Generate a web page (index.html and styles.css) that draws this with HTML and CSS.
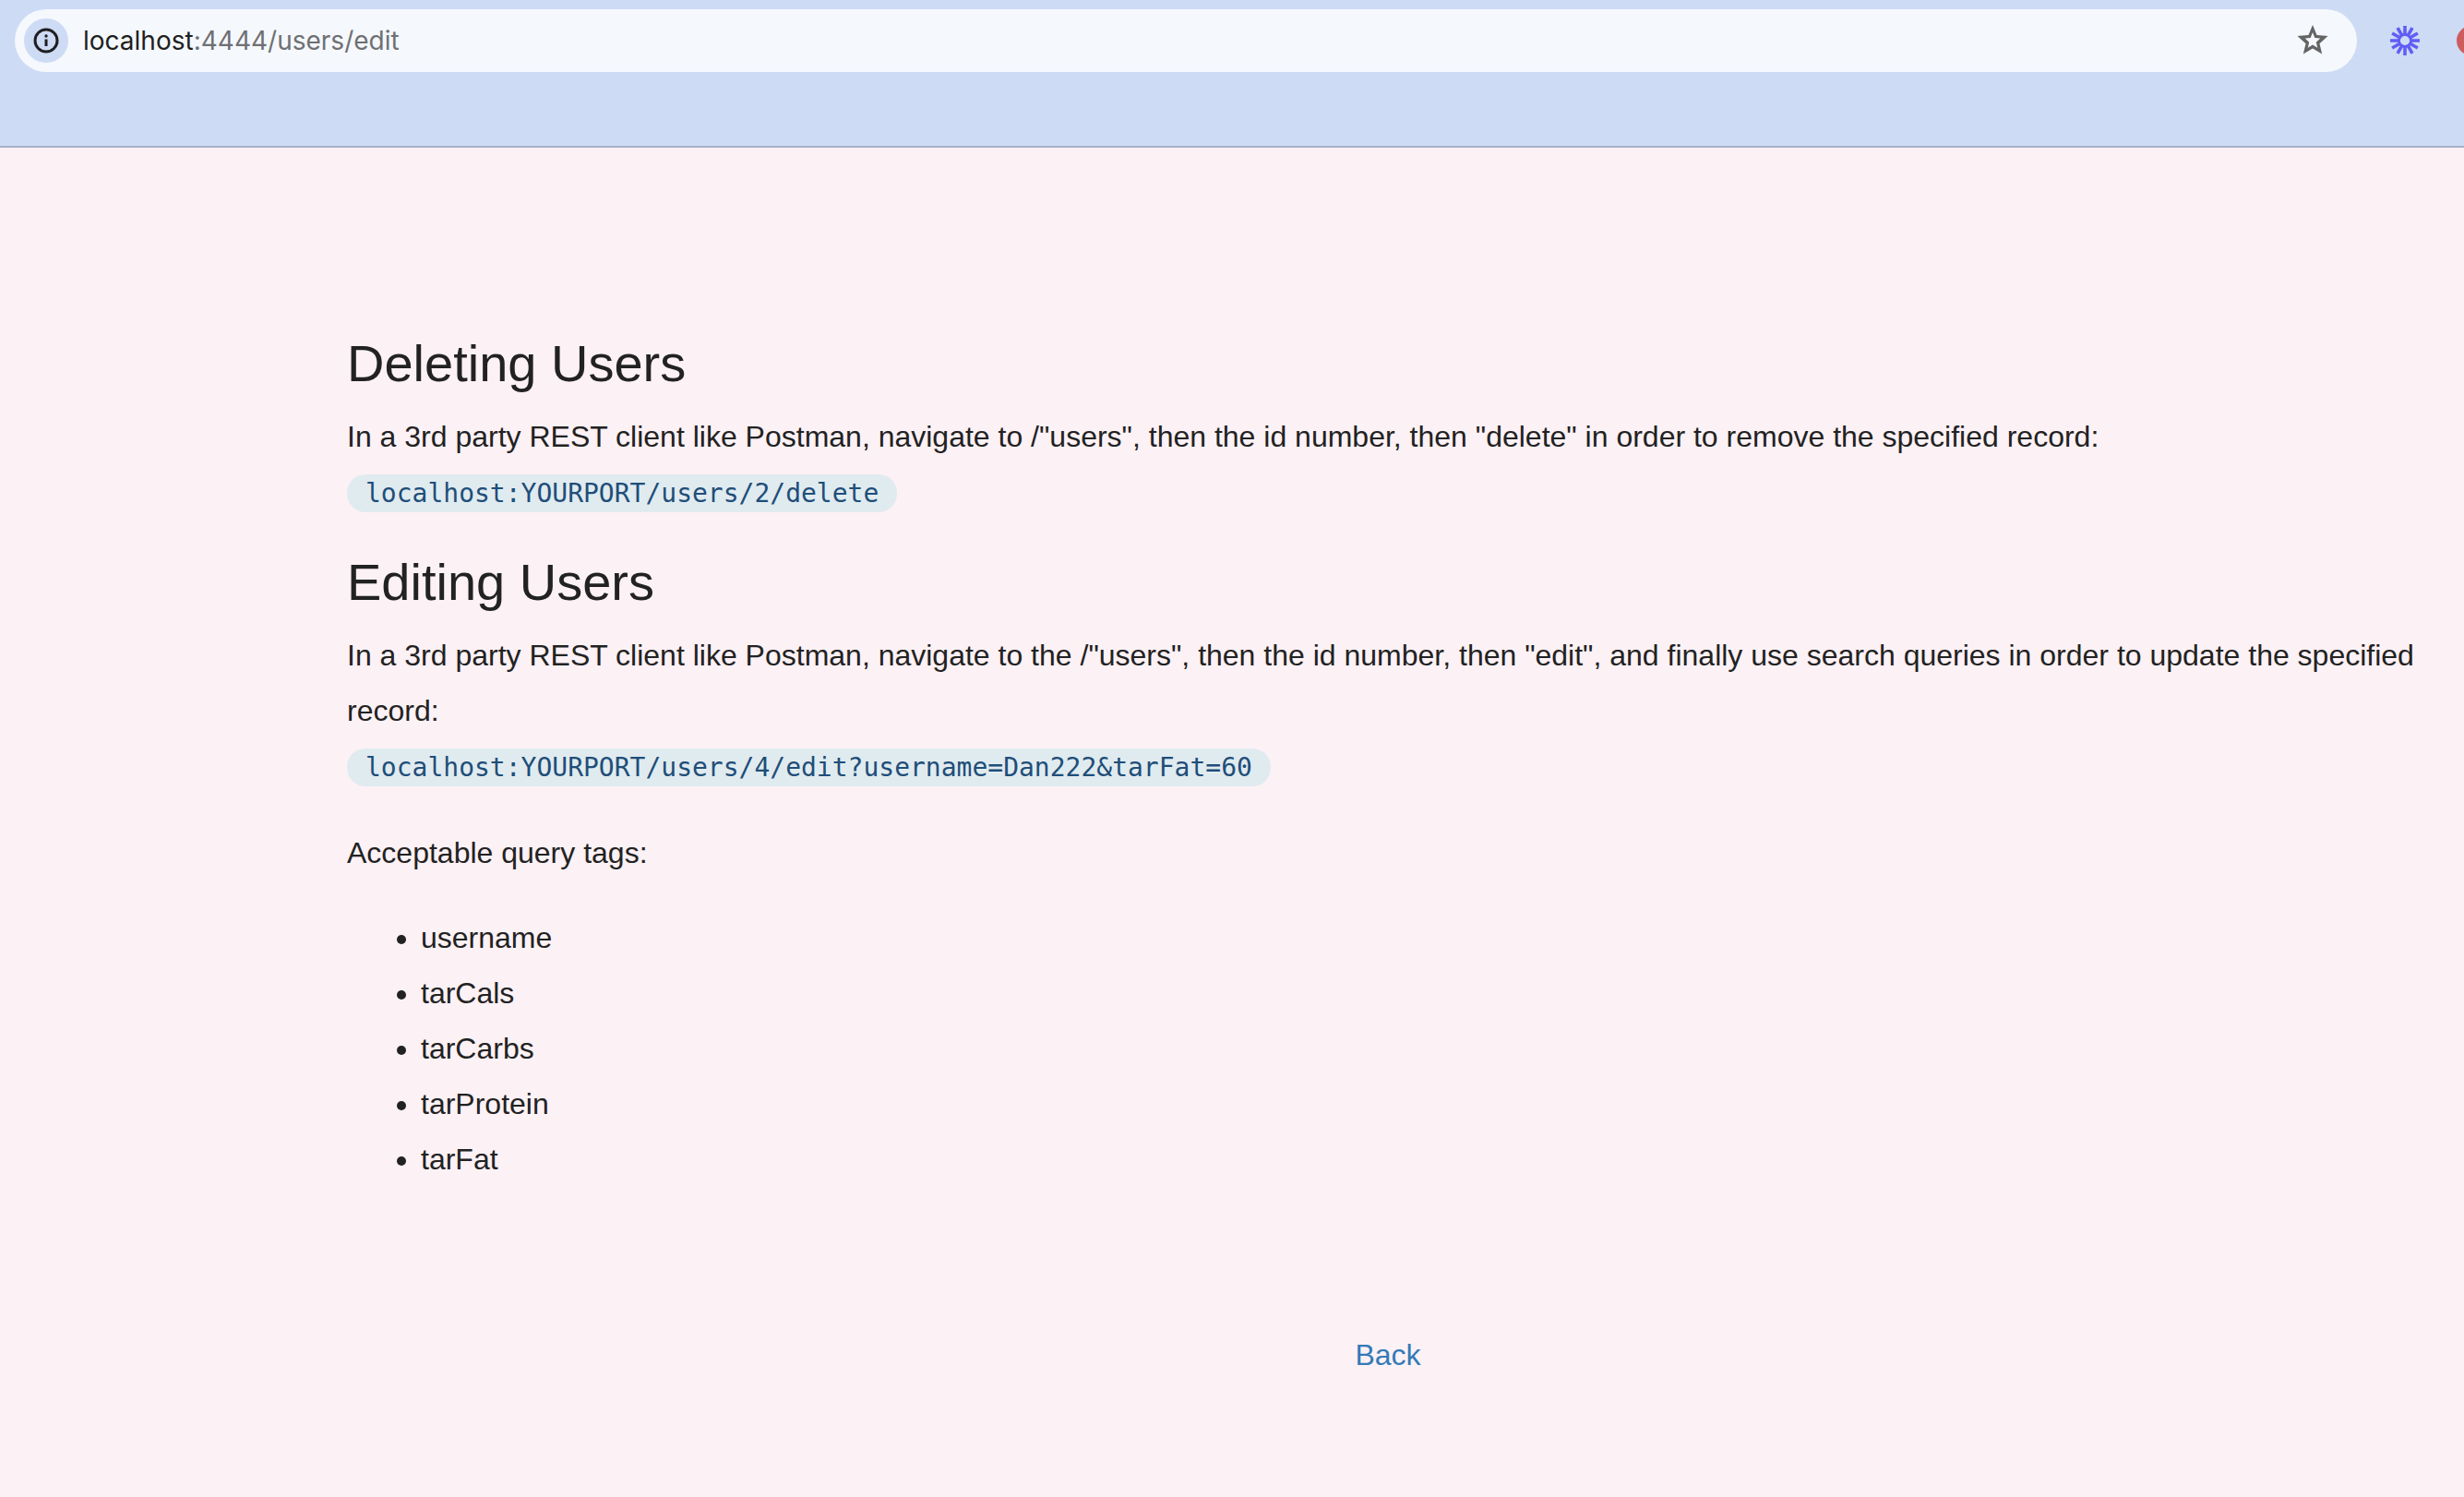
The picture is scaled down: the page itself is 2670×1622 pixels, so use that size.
FILE: index.html
```html
<!DOCTYPE html>
<html lang="en">
<head>
<meta charset="utf-8">
<title>Users</title>
<link rel="stylesheet" href="styles.css">
</head>
<body>
<header class="toolbar">
  <div class="address">
    <button class="icon-button info" type="button" aria-label="View site information">
      <svg width="28" height="28" viewBox="0 0 28 28" fill="none" stroke="#1f1f1f"><circle cx="14" cy="14" r="12" stroke-width="3"/><path d="M14 12.5v7.5" stroke-width="3"/><circle cx="14" cy="9" r="1.7" fill="#1f1f1f" stroke="none"/></svg>
    </button>
    <span class="url"><span class="host">localhost</span>:4444/users/edit</span>
    <button class="icon-button" type="button" aria-label="Bookmark this page">
      <svg width="34" height="34" viewBox="0 0 34 34"><path fill="#636463" fill-rule="evenodd" d="M17 0 21.500 11 33.500 12 24.500 20.200 27.200 31.500 17 25.500 6.800 31.500 9.500 20.200.500 12l12-1zM17 8l-2.300 6-6 .600 4.500 4.100-1.400 6L17 21.500l5.200 3.200-1.400-6 4.500-4.100-6-.600z"/></svg>
    </button>
  </div>
  <button class="icon-button" type="button" aria-label="Loom">
    <svg width="32" height="32" viewBox="-16 -16 32 32" fill="none" stroke="#625df5"><circle r="6.500" stroke-width="2.800"/><path stroke-width="3.600" d="M0-6V-16M0 6V16M-6 0H-16M6 0H16M3-5.200 8-13.860M-3-5.200-8-13.860M3 5.200 8 13.860M-3 5.200-8 13.860M5.200-3 13.860-8M5.200 3 13.860 8M-5.200-3-13.860-8M-5.200 3-13.860 8"/></svg>
  </button>
  <button class="icon-button extension" type="button" aria-label="Extension"></button>
</header>
<main class="content">
  <section>
    <h2>Deleting Users</h2>
    <p>In a 3rd party REST client like Postman, navigate to /"users", then the id number, then "delete" in order to remove the specified record:<br>
    <code>localhost:YOURPORT/users/2/delete</code></p>
  </section>
  <section>
    <h2>Editing Users</h2>
    <p>In a 3rd party REST client like Postman, navigate to the /"users", then the id number, then "edit", and finally use search queries in order to update the specified record:<br>
    <code>localhost:YOURPORT/users/4/edit?username=Dan222&amp;tarFat=60</code></p>
    <p>Acceptable query tags:</p>
    <ul>
      <li>username</li>
      <li>tarCals</li>
      <li>tarCarbs</li>
      <li>tarProtein</li>
      <li>tarFat</li>
    </ul>
  </section>
  <nav class="back"><a href="/users">Back</a></nav>
</main>
</body>
</html>
```
FILE: styles.css
```css
* {
  box-sizing: border-box;
}

body {
  margin: 0;
  background: #fcf1f5;
  color: #222;
  font: 32px/60px "Liberation Sans", Arial, sans-serif;
}

.toolbar {
  display: flex;
  align-items: flex-start;
  height: 160px;
  padding: 10px 0 0 16px;
  overflow: hidden;
  background: #cddbf5;
  border-bottom: 2px solid #a6b0c8;
}

.address {
  display: flex;
  flex: 1;
  align-items: center;
  height: 68px;
  padding: 0 31px 0 10px;
  border-radius: 34px;
  background: #f5f8fd;
}

.icon-button {
  display: flex;
  flex: none;
  align-items: center;
  justify-content: center;
  height: 68px;
  padding: 0;
  border: 0;
  background: none;
}

.info {
  width: 48px;
  height: 48px;
  border-radius: 50%;
  background: #cddbf5;
}

.url {
  flex: 1;
  padding-left: 16px;
  color: #6f7073;
  font: 28px/40px Inter, sans-serif;
}

.host {
  color: #1f1f1f;
}

.address + .icon-button {
  margin: 0 40px 0 36px;
}

.extension {
  width: 32px;
  height: 32px;
  margin: 18px -24px 0 0;
  border-radius: 50%;
  background: #cd5c5c;
}

.content {
  padding: 200px 38px 124px 376px;
}

h2 {
  margin: 0 0 16px;
  font-size: 56px;
  font-weight: 400;
  line-height: 67px;
}

p {
  margin: 0 0 32px;
}

code {
  padding: 4px 20px;
  border-radius: 20px;
  background: #e0ebf0;
  color: #1f4e79;
  font: 28px/60px "DejaVu Sans Mono", monospace;
}

ul {
  margin: 0;
  padding-left: 80px;
}

.back {
  margin-top: 152px;
  text-align: center;
}

.back a {
  color: #337ab7;
  text-decoration: none;
}
```
